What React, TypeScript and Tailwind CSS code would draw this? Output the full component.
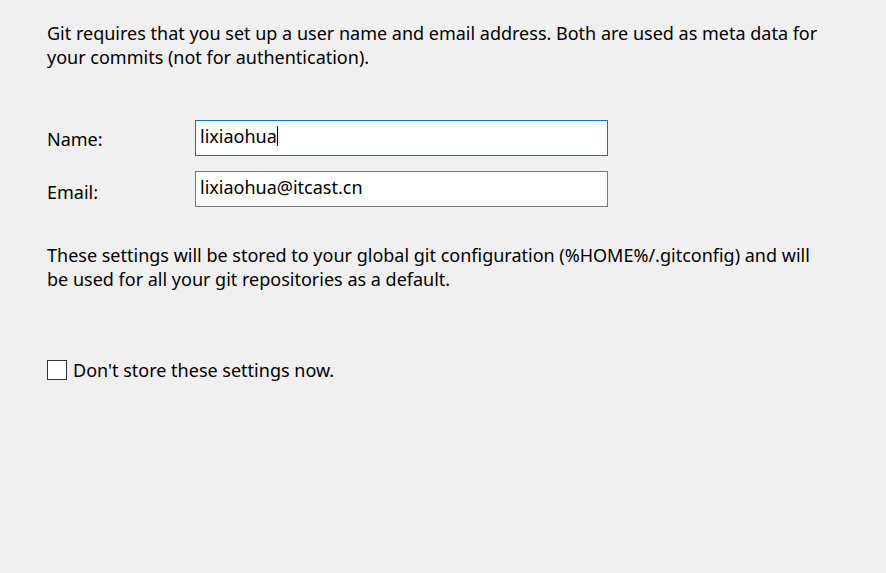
export default function App() {
  return (
    <div
      className="w-[886px] h-[573px] bg-[#f0f0f0] text-black text-[18px] leading-[24px] px-[47px] pt-[21px]"
      style={{ fontFamily: '"Noto Sans", "Segoe UI", sans-serif' }}
    >
      <p className="whitespace-nowrap">
        Git requires that you set up a user name and email address. Both are used as meta data for
        <br />
        your commits (not for authentication).
      </p>

      <div className="mt-[51px] flex flex-col gap-[15px]">
        <div className="flex items-center">
          <label className="w-[148px] pt-[1px]">Name:</label>
          <div className="w-[413px] h-[36px] bg-white border border-[#0078d7] flex items-center px-[4px] pb-[4px]">
            <span>lixiaohua</span>
            <span className="w-px h-[20px] bg-black" />
          </div>
        </div>
        <div className="flex items-center">
          <label className="w-[148px] pt-[6px]">Email:</label>
          <div className="w-[413px] h-[36px] bg-white border border-[#7a7a7a] flex items-center px-[4px] pb-[4px]">
            <span>lixiaohua@itcast.cn</span>
          </div>
        </div>
      </div>

      <p className="mt-[36px] whitespace-nowrap">
        These settings will be stored to your global git configuration (%HOME%/.gitconfig) and will
        <br />
        be used for all your git repositories as a default.
      </p>

      <div className="mt-[67px] flex items-center gap-[6px]">
        <span className="w-[20px] h-[20px] bg-white border border-[#333333]" />
        <span>Don't store these settings now.</span>
      </div>
    </div>
  );
}
